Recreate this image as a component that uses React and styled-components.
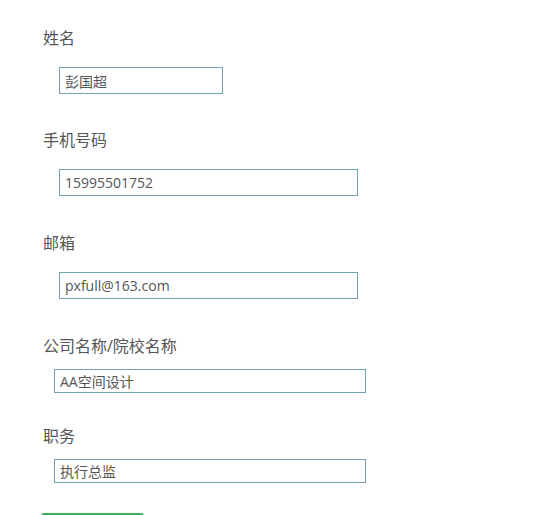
import React from "react";
import styled, { createGlobalStyle } from "styled-components";

const GlobalStyle = createGlobalStyle`
  body {
    margin: 0;
    background: #fff;
    font-family: "Open Sans", "Noto Sans CJK SC", sans-serif;
  }
`;

const fields = [
  { label: "姓名", value: "彭国超", size: "short" },
  { label: "手机号码", value: "15995501752", size: "wide" },
  { label: "邮箱", value: "pxfull@163.com", size: "wide" },
  { label: "公司名称/院校名称", value: "AA空间设计", size: "compact" },
  { label: "职务", value: "执行总监", size: "compact" },
];

const sizes = {
  short: { width: 164, height: 27, indent: 16, gap: 19, after: 36 },
  wide: { width: 299, height: 27, indent: 16, gap: 19, after: 37 },
  compact: { width: 312, height: 24, indent: 11, gap: 13, after: 33 },
};

export default function App() {
  return (
    <>
      <GlobalStyle />
      <Form>
        {fields.map((f) => (
          <Field key={f.label} $after={sizes[f.size].after}>
            <Label $gap={sizes[f.size].gap}>{f.label}</Label>
            <Input
              $size={sizes[f.size]}
              defaultValue={f.value}
              readOnly
            />
          </Field>
        ))}
        <SubmitButton />
      </Form>
    </>
  );
}

const Form = styled.div`
  display: flex;
  flex-direction: column;
  padding: 28px 0 0 43px;
  height: 515px;
  box-sizing: border-box;
  overflow: hidden;
`;

const Field = styled.div`
  display: flex;
  flex-direction: column;
  align-items: flex-start;
  margin-bottom: ${(p) => p.$after}px;

  &:nth-last-child(2) {
    margin-bottom: 30px;
  }
`;

const Label = styled.div`
  font-size: 16px;
  line-height: 20px;
  color: #555;
  margin-bottom: ${(p) => p.$gap}px;
`;

const Input = styled.input`
  box-sizing: border-box;
  width: ${(p) => p.$size.width}px;
  height: ${(p) => p.$size.height}px;
  margin: 0 0 0 ${(p) => p.$size.indent}px;
  padding: 0 5px;
  border: 1px solid #73a2b1;
  border-radius: 0;
  outline: none;
  font-family: "Open Sans", "Noto Sans CJK SC", sans-serif;
  font-size: 14px;
  color: #555;
  background: #fff;
`;

const SubmitButton = styled.button`
  margin-left: -2px;
  width: 103px;
  height: 34px;
  border: none;
  border-radius: 3px;
  background: #3db15b;
  flex-shrink: 0;
`;
